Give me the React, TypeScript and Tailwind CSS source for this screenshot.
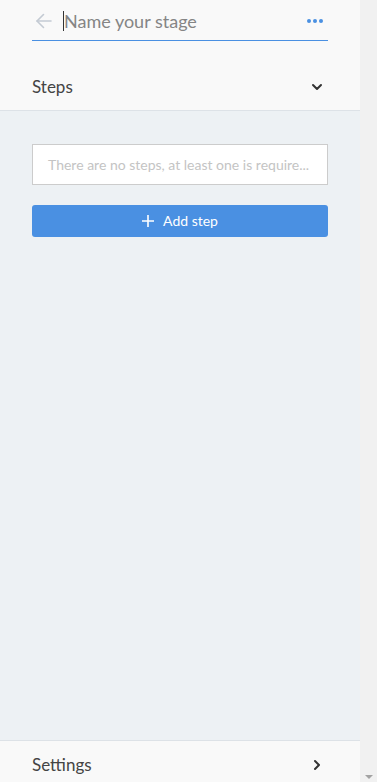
import React from 'react';

const ArrowLeft = () => (
  <svg width="18" height="18" viewBox="0 0 18 18" fill="none" stroke="#c3cad3" strokeWidth="1.6" strokeLinecap="round" strokeLinejoin="round">
    <path d="M16 9H2" />
    <path d="M8.5 2.5L2 9l6.5 6.5" />
  </svg>
);

const Chevron = ({ dir }: { dir: 'down' | 'right' }) => (
  <svg width="14" height="14" viewBox="0 0 14 14" fill="none" stroke="#333" strokeWidth="2" strokeLinecap="round" strokeLinejoin="round">
    {dir === 'down' ? <path d="M3 5l4 4 4-4" /> : <path d="M5 3l4 4-4 4" />}
  </svg>
);

const App: React.FC = () => {
  return (
    <div className="flex h-[782px] w-[377px] overflow-hidden bg-[#f1f1f1] font-['Lato','Noto_Sans',sans-serif]">
      {/* panel */}
      <div className="flex h-full w-[360px] flex-col bg-[#edf1f4]">
        {/* header */}
        <div className="flex h-[111px] flex-col border-b border-[#dde2e7] bg-[#f9f9f9] px-8">
          <div className="flex h-[41px] items-center border-b border-[#4a90e2] pt-[2px]">
            <span className="ml-[3px] flex w-[28px] items-center">
              <ArrowLeft />
            </span>
            <span className="h-[20px] w-px bg-[#333]" />
            <span className="flex-1 text-[18px] leading-none text-[#858585]">Name your stage</span>
            <span className="mr-[5px] flex gap-[2px]">
              <span className="h-[4px] w-[4px] rounded-full bg-[#4a90e2]" />
              <span className="h-[4px] w-[4px] rounded-full bg-[#4a90e2]" />
              <span className="h-[4px] w-[4px] rounded-full bg-[#4a90e2]" />
            </span>
          </div>
          <div className="mt-[33px] flex items-center justify-between">
            <span className="text-[17px] text-[#444]">Steps</span>
            <span className="mr-[4px]">
              <Chevron dir="down" />
            </span>
          </div>
        </div>

        {/* steps body */}
        <div className="flex flex-1 flex-col px-8 pt-[33px]">
          <div className="flex h-[41px] items-center border border-[#cccccc] bg-white px-[15px]">
            <span className="whitespace-nowrap text-[14px] text-[#c4c4c4]">There are no steps, at least one is require...</span>
          </div>
          <button className="mt-[20px] flex h-[32px] items-center justify-center gap-[9px] rounded-[3px] bg-[#4a90e2] pb-[1px] text-[14px] text-white">
            <svg width="12" height="12" viewBox="0 0 12 12" stroke="white" strokeWidth="1.6">
              <path d="M6 0v12M0 6h12" />
            </svg>
            Add step
          </button>
        </div>

        {/* settings */}
        <div className="flex h-[42px] items-center justify-between border-t border-[#dde2e7] bg-[#f9f9f9] px-8 pt-[6px]">
          <span className="text-[17px] text-[#444]">Settings</span>
          <span className="mr-[4px]">
            <Chevron dir="right" />
          </span>
        </div>
      </div>

      {/* scrollbar track */}
      <div className="flex h-full w-[17px] flex-col items-center justify-end pb-[3px]">
        <div className="h-0 w-0 border-x-[4px] border-t-[4px] border-x-transparent border-t-[#a3a3a3]" />
      </div>
    </div>
  );
};

export default App;
